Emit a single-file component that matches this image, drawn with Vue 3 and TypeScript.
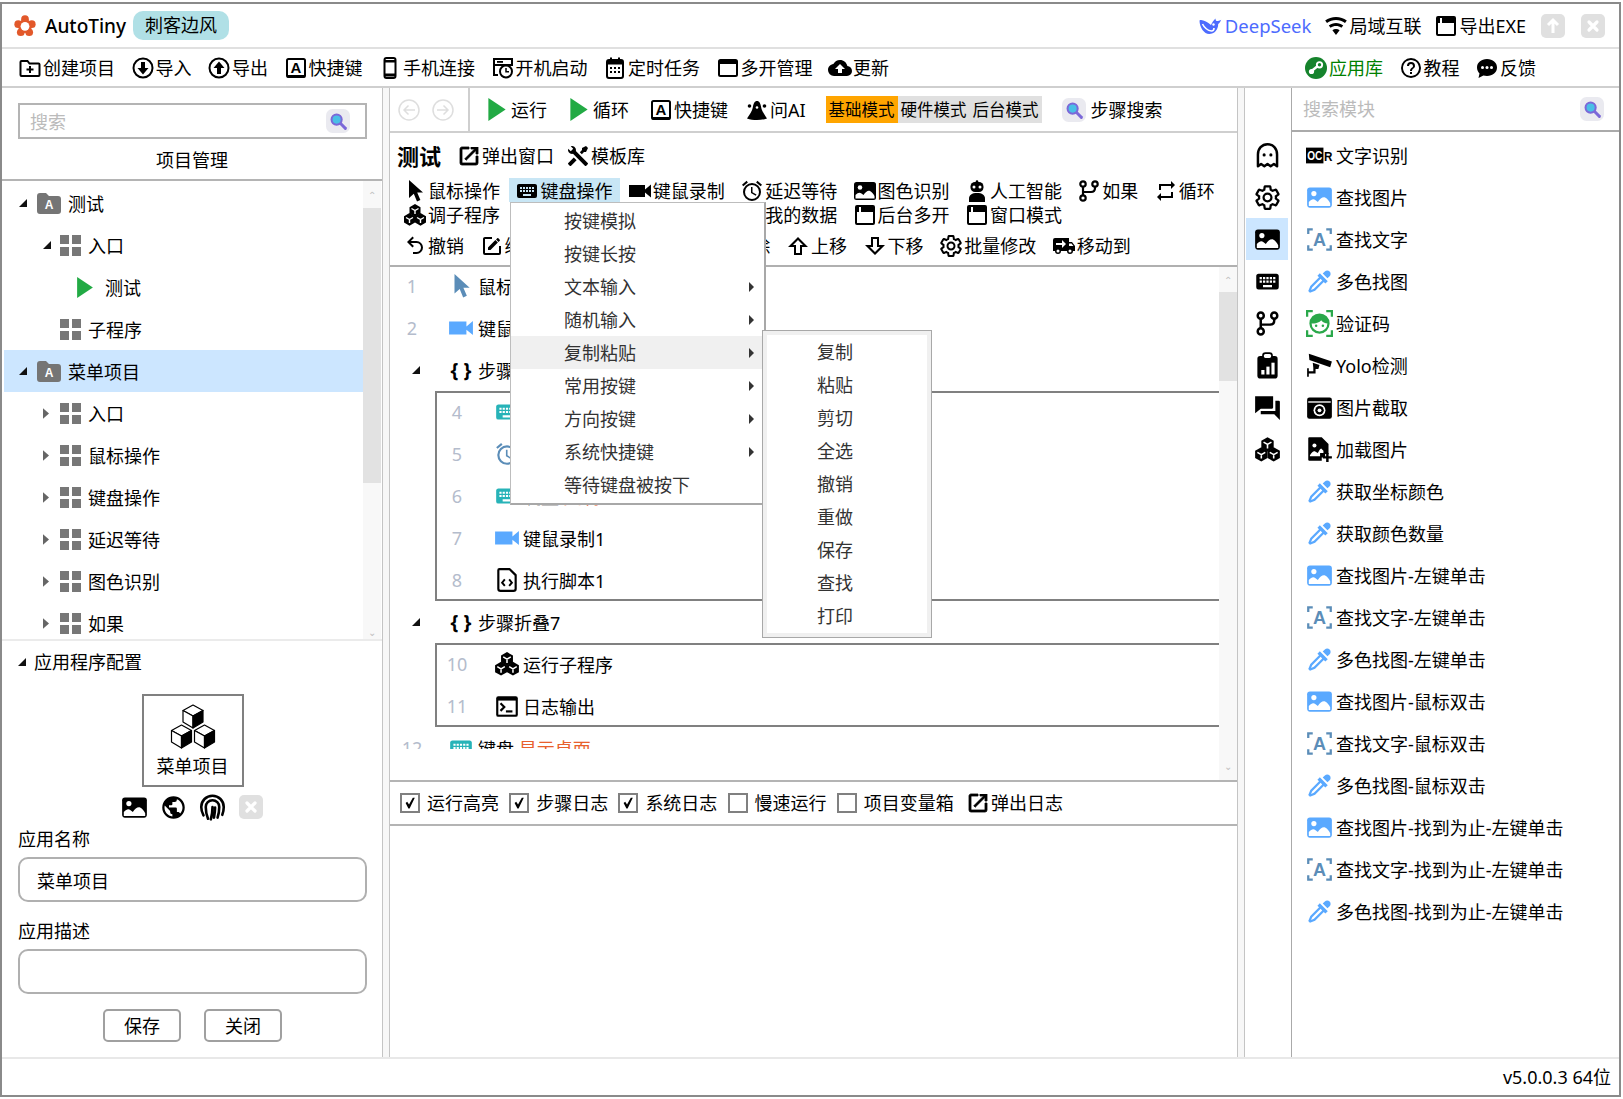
<script setup lang="ts">
interface Tool { icon: string; text: string; color?: string; active?: boolean }
interface TreeRow { level: number; fold: '' | 'open' | 'closed'; kind: string; text: string; selected?: boolean }
interface Step { n: number; icon?: string; color?: string; text: string; hot?: string; brace?: boolean }

const menuItems: Tool[] = [
  { icon: 'i-folder-add', text: '创建项目' },
  { icon: 'i-down-circle', text: '导入' },
  { icon: 'i-up-circle', text: '导出' },
  { icon: 'i-key-a', text: '快捷键' },
  { icon: 'i-phone', text: '手机连接' },
  { icon: 'i-boot', text: '开机启动' },
  { icon: 'i-calendar', text: '定时任务' },
  { icon: 'i-window-plain', text: '多开管理' },
  { icon: 'i-cloud', text: '更新' }
]
const menuRight: Tool[] = [
  { icon: 'i-steam', text: '应用库', color: 'c-green' },
  { icon: 'i-help', text: '教程' },
  { icon: 'i-chat', text: '反馈' }
]
const tree: TreeRow[] = [
  { level: 0, fold: 'open', kind: 'folder', text: '测试' },
  { level: 1, fold: 'open', kind: 'grid', text: '入口' },
  { level: 2, fold: '', kind: 'play', text: '测试' },
  { level: 1, fold: '', kind: 'grid', text: '子程序' },
  { level: 0, fold: 'open', kind: 'folder', text: '菜单项目', selected: true },
  { level: 1, fold: 'closed', kind: 'grid', text: '入口' },
  { level: 1, fold: 'closed', kind: 'grid', text: '鼠标操作' },
  { level: 1, fold: 'closed', kind: 'grid', text: '键盘操作' },
  { level: 1, fold: 'closed', kind: 'grid', text: '延迟等待' },
  { level: 1, fold: 'closed', kind: 'grid', text: '图色识别' },
  { level: 1, fold: 'closed', kind: 'grid', text: '如果' }
]
const modules1: Tool[] = [
  { icon: 'i-cursor', text: '鼠标操作' },
  { icon: 'i-keyboard', text: '键盘操作', active: true },
  { icon: 'i-video', text: '键鼠录制' },
  { icon: 'i-alarm', text: '延迟等待' },
  { icon: 'i-image', text: '图色识别' },
  { icon: 'i-robot', text: '人工智能' },
  { icon: 'i-branch', text: '如果' },
  { icon: 'i-repeat', text: '循环' },
  { icon: 'i-cubes-b', text: '调子程序' },
  { icon: 'i-script', text: '执行脚本' },
  { icon: 'i-console', text: '日志输出' },
  { icon: 'i-image', text: '我的数据' },
  { icon: 'i-win', text: '后台多开' },
  { icon: 'i-win', text: '窗口模式' }
]
const editTools: Tool[] = [
  { icon: 'i-undo', text: '撤销' },
  { icon: 'i-edit', text: '编辑' },
  { icon: 'i-edit', text: '复制' },
  { icon: 'i-edit', text: '粘贴' },
  { icon: 'i-edit', text: '删除' },
  { icon: 'i-up-bold', text: '上移' },
  { icon: 'i-down-bold', text: '下移' },
  { icon: 'i-gear', text: '批量修改' },
  { icon: 'i-truck', text: '移动到' }
]
const keyMenu = ['按键模拟', '按键长按', '文本输入', '随机输入', '复制粘贴', '常用按键', '方向按键', '系统快捷键', '等待键盘被按下']
const keyMenuArrow = ['文本输入', '随机输入', '复制粘贴', '常用按键', '方向按键', '系统快捷键']
const subMenu = ['复制', '粘贴', '剪切', '全选', '撤销', '重做', '保存', '查找', '打印']

const topSteps: Step[] = [
  { n: 1, icon: 'i-cursor', color: 'c-steel', text: '鼠标点击' },
  { n: 2, icon: 'i-video', color: 'c-blue', text: '键鼠录制2' }
]
const group1: Step[] = [
  { n: 4, icon: 'i-keyboard', color: 'c-teal', text: '键盘 ', hot: '粘贴' },
  { n: 5, icon: 'i-alarm', color: 'c-steel', text: '延迟等待' },
  { n: 6, icon: 'i-keyboard', color: 'c-teal', text: '键盘 ', hot: '复制' },
  { n: 7, icon: 'i-video', color: 'c-blue', text: '键鼠录制1' },
  { n: 8, icon: 'i-script', text: '执行脚本1' }
]
const group2: Step[] = [
  { n: 10, icon: 'i-cubes-b', text: '运行子程序' },
  { n: 11, icon: 'i-console', text: '日志输出' }
]
const logChecks = [
  { text: '运行高亮', on: true },
  { text: '步骤日志', on: true },
  { text: '系统日志', on: true },
  { text: '慢速运行', on: false },
  { text: '项目变量箱', on: false }
]
const sideIcons = ['i-ghost', 'i-gear', 'i-image', 'i-keyboard', 'i-branch', 'i-clipboard', 'i-forum', 'i-cubes-b']
const modules: Tool[] = [
  { icon: 'i-ocr', text: '文字识别' },
  { icon: 'i-image', text: '查找图片', color: 'c-blue' },
  { icon: 'i-findtext', text: '查找文字', color: 'c-steel' },
  { icon: 'i-dropper', text: '多色找图', color: 'c-blue' },
  { icon: 'i-captcha', text: '验证码', color: 'c-leaf' },
  { icon: 'i-cctv', text: 'Yolo检测' },
  { icon: 'i-camera', text: '图片截取' },
  { icon: 'i-loadimg', text: '加载图片' },
  { icon: 'i-dropper', text: '获取坐标颜色', color: 'c-blue' },
  { icon: 'i-dropper', text: '获取颜色数量', color: 'c-blue' },
  { icon: 'i-image', text: '查找图片-左键单击', color: 'c-blue' },
  { icon: 'i-findtext', text: '查找文字-左键单击', color: 'c-steel' },
  { icon: 'i-dropper', text: '多色找图-左键单击', color: 'c-blue' },
  { icon: 'i-image', text: '查找图片-鼠标双击', color: 'c-blue' },
  { icon: 'i-findtext', text: '查找文字-鼠标双击', color: 'c-steel' },
  { icon: 'i-dropper', text: '多色找图-鼠标双击', color: 'c-blue' },
  { icon: 'i-image', text: '查找图片-找到为止-左键单击', color: 'c-blue' },
  { icon: 'i-findtext', text: '查找文字-找到为止-左键单击', color: 'c-steel' },
  { icon: 'i-dropper', text: '多色找图-找到为止-左键单击', color: 'c-blue' }
]
</script>

<template>
  <svg class="defs" aria-hidden="true">
    <symbol id="i-logo" viewBox="0 0 24 24">
      <g fill="#e2582a"><circle cx="12" cy="4.6" r="4.2"/><circle cx="19.4" cy="10" r="4.2"/><circle cx="16.6" cy="18.8" r="4.2"/><circle cx="7.4" cy="18.8" r="4.2"/><circle cx="4.6" cy="10" r="4.2"/><circle cx="12" cy="12" r="7.5"/></g>
      <circle cx="12" cy="12.4" r="4.8" fill="#fff"/>
    </symbol>
    <symbol id="i-whale" viewBox="0 0 24 24">
      <path fill="#4d6bfe" d="M1.500 6.500C4 5 9 8 13 11c1-2.500 2.500-4.500 4.500-6.500 0 2 .8 2.800 2.500 2.500 1.200 0 2.200-.6 3.200-1.200-.7 2-1.700 3.200-3 4.200 0 6-4 10-9 10S1.500 13.500 1.500 6.500z"/>
      <path fill="none" stroke="#fff" stroke-width="1.600" d="M4.500 10c2 4 5 6.500 9 7 1.500 0 2.500-1 2.500-3"/>
      <circle cx="15.500" cy="10.500" r="1.200" fill="#fff"/>
    </symbol>
    <symbol id="i-wifi" viewBox="0 0 24 24"><path fill="currentColor" d="M12,21L15.6,16.2C14.6,15.45 13.35,15 12,15C10.65,15 9.4,15.45 8.4,16.2L12,21M12,3C7.95,3 4.21,4.34 1.2,6.6L3,9C5.5,7.12 8.62,6 12,6C15.38,6 18.5,7.12 21,9L22.8,6.6C19.79,4.34 16.05,3 12,3M12,9C9.3,9 6.81,9.89 4.8,11.4L6.6,13.8C8.1,12.67 9.97,12 12,12C14.03,12 15.9,12.67 17.4,13.8L19.2,11.4C17.19,9.89 14.7,9 12,9Z"/></symbol>
    <symbol id="i-win" viewBox="0 0 24 24">
      <rect x="3" y="3" width="18" height="18" rx="1" fill="#fff" stroke="#000" stroke-width="2"/>
      <rect x="3" y="3" width="18" height="6" fill="#000"/><rect x="6" y="4" width="2" height="5" fill="#fff"/>
    </symbol>
    <symbol id="i-window-plain" viewBox="0 0 24 24">
      <rect x="3" y="4" width="18" height="16" rx="1.500" fill="none" stroke="#000" stroke-width="2"/><rect x="3" y="4" width="18" height="4" fill="#000"/>
    </symbol>
    <symbol id="i-folder-add" viewBox="0 0 24 24">
      <path fill="none" stroke="#000" stroke-width="2" d="M2.500 6a1 1 0 0 1 1-1h6l2 2.500h9a1 1 0 0 1 1 1V19a1 1 0 0 1-1 1h-17a1 1 0 0 1-1-1z"/>
      <path fill="#000" d="M11 10h2v2.500h2.500v2H13V17h-2v-2.500H8.500v-2H11z"/>
    </symbol>
    <symbol id="i-down-circle" viewBox="0 0 24 24">
      <circle cx="12" cy="12" r="9.500" fill="none" stroke="#000" stroke-width="2"/><path fill="#000" d="M10 6h4v6h3.500L12 18.500 6.500 12H10z"/>
    </symbol>
    <symbol id="i-up-circle" viewBox="0 0 24 24">
      <circle cx="12" cy="12" r="9.500" fill="none" stroke="#000" stroke-width="2"/><path fill="#000" d="M10 18h4v-6h3.500L12 5.500 6.500 12H10z"/>
    </symbol>
    <symbol id="i-key-a" viewBox="0 0 24 24">
      <rect x="3" y="3" width="18" height="18" rx="1.500" fill="none" stroke="#000" stroke-width="2"/><rect x="3" y="19" width="18" height="2.500" fill="#000"/>
    </symbol>
    <symbol id="i-phone" viewBox="0 0 24 24">
      <rect x="6.500" y="2" width="11" height="20" rx="2" fill="none" stroke="#000" stroke-width="2"/><rect x="6.500" y="4" width="11" height="2.500" fill="#000"/><rect x="6.500" y="17.500" width="11" height="3" fill="#000"/>
    </symbol>
    <symbol id="i-boot" viewBox="0 0 24 24">
      <path fill="none" stroke="#000" stroke-width="2" d="M3 3h18v6H3zM3 9v10h4"/>
      <rect x="6" y="5" width="6" height="1.800" fill="#000"/>
      <circle cx="15" cy="15.500" r="6" fill="#fff" stroke="#000" stroke-width="2"/>
      <path fill="none" stroke="#000" stroke-width="1.500" d="M15 12v3.800h3"/>
    </symbol>
    <symbol id="i-calendar" viewBox="0 0 24 24">
      <rect x="4" y="4" width="16" height="18" rx="2" fill="none" stroke="#000" stroke-width="2"/><rect x="4" y="4" width="16" height="4.500" fill="#000"/><rect x="7" y="1.500" width="2" height="4" fill="#000"/><rect x="15" y="1.500" width="2" height="4" fill="#000"/>
      <g fill="#000"><rect x="7" y="11" width="2" height="2"/><rect x="11" y="11" width="2" height="2"/><rect x="15" y="11" width="2" height="2"/><rect x="7" y="15" width="2" height="2"/><rect x="11" y="15" width="2" height="2"/><rect x="15" y="15" width="2" height="2"/></g>
    </symbol>
    <symbol id="i-cloud" viewBox="0 0 24 24"><path fill="currentColor" d="M14,13V17H10V13H7L12,8L17,13M19.35,10.03C18.67,6.59 15.64,4 12,4C9.11,4 6.6,5.64 5.35,8.03C2.34,8.36 0,10.9 0,14A6,6 0 0,0 6,20H19A5,5 0 0,0 24,15C24,12.36 21.95,10.22 19.35,10.03Z"/></symbol>
    <symbol id="i-steam" viewBox="0 0 24 24">
      <circle cx="12" cy="12" r="11" fill="#15832c"/>
      <path stroke="#fff" stroke-width="2.400" d="M15 9 7 15.500"/>
      <circle cx="15.500" cy="8.800" r="3.600" fill="#fff"/><circle cx="15.500" cy="8.800" r="1.700" fill="#15832c"/>
      <circle cx="7.500" cy="15.500" r="2.600" fill="#fff"/>
    </symbol>
    <symbol id="i-help" viewBox="0 0 24 24"><path fill="currentColor" d="M11,18H13V16H11V18M12,2A10,10 0 0,0 2,12A10,10 0 0,0 12,22A10,10 0 0,0 22,12A10,10 0 0,0 12,2M12,20C7.59,20 4,16.41 4,12C4,7.59 7.59,4 12,4C16.41,4 20,7.59 20,12C20,16.41 16.41,20 12,20M12,6A4,4 0 0,0 8,10H10A2,2 0 0,1 12,8A2,2 0 0,1 14,10C14,12 11,11.75 11,15H13C13,12.75 16,12.500 16,10A4,4 0 0,0 12,6Z"/></symbol>
    <symbol id="i-chat" viewBox="0 0 24 24">
      <path fill="#000" d="M12 3c5.800 0 10 3.600 10 8.500S17.800 20 12 20c-1.300 0-2.500-.2-3.600-.5L3.500 22l1-4.400C3 16 2 13.900 2 11.500 2 6.600 6.200 3 12 3z"/>
      <g fill="#fff"><circle cx="7.500" cy="11.500" r="1.500"/><circle cx="12" cy="11.500" r="1.500"/><circle cx="16.500" cy="11.500" r="1.500"/></g>
    </symbol>
    <symbol id="i-search" viewBox="0 0 26 26">
      <rect width="26" height="26" rx="7" fill="#eaeaf0"/>
      <path stroke="#7b68d8" stroke-width="3.200" stroke-linecap="round" d="M15.500 15.500 21 21"/>
      <circle cx="11.500" cy="11.500" r="5.500" fill="#49bfe6" stroke="#7b68d8" stroke-width="2.200"/>
    </symbol>
    <symbol id="i-play" viewBox="0 0 18 24"><polygon points="0,0 18,12 0,24" fill="#22aa44"/></symbol>
    <symbol id="i-bell" viewBox="0 0 24 24">
      <path fill="#000" d="M12 3c2.500 0 3.500 2.500 4.200 6.500 .5 3 3 7 5.800 11 -6 2-14 2-20 0 2.800-4 5.300-8 5.800-11C8.500 5.500 9.500 3 12 3z"/>
      <circle cx="4.500" cy="8" r="1.800" fill="#000"/><circle cx="19.500" cy="8" r="1.800" fill="#000"/>
      <circle cx="12" cy="9.500" r="1.300" fill="#fff"/>
    </symbol>
    <symbol id="i-open" viewBox="0 0 24 24"><path fill="currentColor" stroke="currentColor" stroke-width=".8" d="M14,3V5H17.59L7.76,14.83L9.17,16.24L19,6.41V10H21V3M19,19H5V5H12V3H5C3.89,3 3,3.9 3,5V19A2,2 0 0,0 5,21H19A2,2 0 0,0 21,19V12H19V19Z"/></symbol>
    <symbol id="i-tools" viewBox="0 0 24 24"><path fill="currentColor" d="M21.71 20.29L20.29 21.71A1 1 0 0 1 18.88 21.71L7 9.85A3.81 3.81 0 0 1 6 10A4 4 0 0 1 2.22 4.7L4.76 7.24L5.29 6.71L6.71 5.29L7.24 4.76L4.7 2.22A4 4 0 0 1 10 6A3.81 3.81 0 0 1 9.85 7L21.71 18.88A1 1 0 0 1 21.71 20.29M2.29 18.88A1 1 0 0 0 2.29 20.29L3.71 21.71A1 1 0 0 0 5.12 21.71L10.59 16.25L7.76 13.42M20 2L16 4V6L13.83 8.17L15.83 10.17L18 8H20L22 4Z"/></symbol>
    <symbol id="i-cursor" viewBox="0 0 24 24"><path fill="currentColor" d="M6 1v18l4.800-4.200L14 22.500l3.400-1.500-3.200-7.500H20z"/></symbol>
    <symbol id="i-keyboard" viewBox="0 0 24 24"><path fill="currentColor" d="M19,10H17V8H19M19,13H17V11H19M16,10H14V8H16M16,13H14V11H16M16,17H8V15H16M7,10H5V8H7M7,13H5V11H7M8,11H10V13H8M8,8H10V10H8M11,11H13V13H11M11,8H13V10H11M20,5H4C2.89,5 2,5.890 2,7V17A2,2 0 0,0 4,19H20A2,2 0 0,0 22,17V7C22,5.890 21.1,5 20,5Z"/></symbol>
    <symbol id="i-video" viewBox="0 0 24 24"><path fill="currentColor" d="M17,10.500V6H1V18H17V13.500L23,18.500V5.500L17,10.500Z"/></symbol>
    <symbol id="i-alarm" viewBox="0 0 24 24"><path fill="currentColor" d="M12,20A7,7 0 0,1 5,13A7,7 0 0,1 12,6A7,7 0 0,1 19,13A7,7 0 0,1 12,20M12,4A9,9 0 0,0 3,13A9,9 0 0,0 12,22A9,9 0 0,0 21,13A9,9 0 0,0 12,4M12.500,8H11V14L15.750,16.850L16.500,15.620L12.500,13.250V8M7.880,3.390L6.600,1.860L2,5.710L3.290,7.240L7.880,3.390M22,5.720L17.400,1.860L16.110,3.390L20.710,7.250L22,5.720Z"/></symbol>
    <symbol id="i-image" viewBox="0 0 24 24">
      <rect x="1" y="3" width="22" height="18" rx="2.500" fill="currentColor"/>
      <circle cx="7" cy="8.500" r="2.300" fill="#fff"/>
      <path fill="#fff" d="M2.500 19.500v-3.500c2.500-2.500 4-3 6-1.500l2 1.500c2-3 4.500-5 6.500-4 2 1 3.500 3 4.500 5v2.500z"/>
    </symbol>
    <symbol id="i-robot" viewBox="0 0 24 24">
      <circle cx="12" cy="2.500" r="1.300" fill="#000"/><rect x="5.500" y="3" width="13" height="10" rx="4.500" fill="#000"/>
      <circle cx="9" cy="8" r="1.500" fill="#fff"/><circle cx="15" cy="8" r="1.500" fill="#fff"/>
      <path fill="#000" d="M4 23v-3.500C4 16 7 14 12 14s8 2 8 5.500V23z"/>
    </symbol>
    <symbol id="i-branch" viewBox="0 0 24 24">
      <g fill="none" stroke="currentColor" stroke-width="2.200"><circle cx="6" cy="5" r="2.700"/><circle cx="6" cy="19" r="2.700"/><circle cx="18" cy="5" r="2.700"/><path d="M6 7.700v8.600M18 7.700V9c0 2.500-1.500 4-4 4H6"/></g>
    </symbol>
    <symbol id="i-repeat" viewBox="0 0 24 24"><path fill="currentColor" d="M17,17H7V14L3,18L7,22V19H19V13H17M7,7H17V10L21,6L17,2V5H5V11H7V7Z"/></symbol>
    <symbol id="i-cubes-b" viewBox="0 0 24 24">
      <g fill="#000"><polygon points="12,1 17.500,4.200 17.500,10.500 12,13.700 6.500,10.500 6.500,4.200"/><polygon points="6.500,10 12,13.200 12,19.500 6.500,22.700 1,19.500 1,13.200"/><polygon points="17.500,10 23,13.200 23,19.500 17.500,22.700 12,19.500 12,13.200"/></g>
      <g fill="none" stroke="#fff" stroke-width="1.400"><path d="M8.500 5.500 12 7.500 15.500 5.500M12 7.500v3.500M3 14.500 6.500 16.500 10 14.500M6.500 16.500v3.500M14 14.500 17.500 16.500 21 14.500M17.500 16.500v3.500"/></g>
    </symbol>
    <symbol id="i-script" viewBox="0 0 24 24">
      <path fill="#fff" stroke="#000" stroke-width="2" stroke-linejoin="round" d="M5 2h9.500L20 7.500V20a2 2 0 0 1-2 2H6a2 2 0 0 1-2-2V3a1 1 0 0 1 1-1z"/>
      <path fill="none" stroke="#000" stroke-width="1.800" d="M10 11.500 7.500 14.500 10 17.500M14 11.500l2.500 3-2.500 3"/>
    </symbol>
    <symbol id="i-console" viewBox="0 0 24 24">
      <rect x="2" y="3" width="20" height="19" rx="2" fill="#000"/><rect x="4" y="7" width="16" height="13" fill="#fff"/>
      <path fill="none" stroke="#000" stroke-width="2" d="M6 9.500l3.500 3.500L6 16.500"/><rect x="11" y="16" width="6" height="2" fill="#000"/>
    </symbol>
    <symbol id="i-undo" viewBox="0 0 24 24"><path fill="currentColor" d="M13.500,7A6.500,6.500 0 0,1 20,13.500A6.500,6.500 0 0,1 13.500,20H10V18H13.500C16,18 18,16 18,13.500C18,11 16,9 13.500,9H7.830L10.910,12.090L9.500,13.500L4,8L9.500,2.500L10.920,3.910L7.830,7H13.500Z"/></symbol>
    <symbol id="i-edit" viewBox="0 0 24 24"><path fill="currentColor" d="M5,3C3.890,3 3,3.890 3,5V19A2,2 0 0,0 5,21H19A2,2 0 0,0 21,19V12H19V19H5V5H12V3H5M17.780,4C17.590,4 17.400,4.070 17.250,4.220L16.030,5.430L18.530,7.930L19.750,6.720C20.040,6.430 20.040,5.950 19.750,5.660L18.330,4.220C18.180,4.070 18,4 17.780,4M15.370,6.120L8,13.500V16H10.500L17.870,8.620L15.370,6.120Z"/></symbol>
    <symbol id="i-up-bold" viewBox="0 0 24 24"><path fill="currentColor" d="M16,13V21H8V13H2L12,3L22,13H16M7,11H10V19H14V11H17L12,6L7,11Z"/></symbol>
    <symbol id="i-down-bold" viewBox="0 0 24 24"><path fill="currentColor" d="M22,11L12,21L2,11H8V3H16V11H22M12,18L17,13H14V5H10V13H7L12,18Z"/></symbol>
    <symbol id="i-gear" viewBox="0 0 24 24"><path fill="none" stroke="currentColor" stroke-width="2" d="M12,15.500A3.500,3.500 0 0,1 8.500,12A3.500,3.500 0 0,1 12,8.500A3.500,3.500 0 0,1 15.500,12A3.500,3.500 0 0,1 12,15.500M19.430,12.970C19.470,12.650 19.500,12.330 19.500,12C19.500,11.670 19.470,11.340 19.430,11L21.540,9.370C21.730,9.220 21.780,8.950 21.660,8.730L19.660,5.270C19.540,5.050 19.270,4.960 19.050,5.050L16.560,6.050C16.040,5.660 15.500,5.320 14.870,5.070L14.500,2.420C14.460,2.180 14.250,2 14,2H10C9.750,2 9.540,2.180 9.500,2.420L9.130,5.070C8.500,5.320 7.960,5.660 7.440,6.050L4.950,5.050C4.730,4.960 4.460,5.050 4.340,5.270L2.340,8.730C2.210,8.950 2.270,9.220 2.460,9.370L4.570,11C4.530,11.340 4.500,11.670 4.500,12C4.500,12.330 4.530,12.650 4.570,12.970L2.460,14.630C2.270,14.780 2.210,15.050 2.340,15.270L4.340,18.730C4.460,18.950 4.730,19.030 4.950,18.950L7.440,17.940C7.960,18.340 8.500,18.680 9.130,18.930L9.500,21.580C9.540,21.820 9.750,22 10,22H14C14.250,22 14.460,21.820 14.500,21.580L14.870,18.930C15.500,18.670 16.040,18.340 16.560,17.940L19.050,18.950C19.270,19.030 19.540,18.950 19.660,18.730L21.660,15.270C21.780,15.050 21.730,14.780 21.540,14.630L19.430,12.970Z"/></symbol>
    <symbol id="i-truck" viewBox="0 0 24 24"><path fill="currentColor" d="M3,4A2,2 0 0,0 1,6V17H3A3,3 0 0,0 6,20A3,3 0 0,0 9,17H15A3,3 0 0,0 18,20A3,3 0 0,0 21,17H23V12L20,8H17V4M10,6L14,10L10,14V11H4V9H10M17,9.500H19.500L21.470,12H17M6,15.500A1.500,1.500 0 0,1 7.500,17A1.500,1.500 0 0,1 6,18.500A1.500,1.500 0 0,1 4.500,17A1.500,1.500 0 0,1 6,15.500M18,15.500A1.500,1.500 0 0,1 19.500,17A1.500,1.500 0 0,1 18,18.500A1.500,1.500 0 0,1 16.500,17A1.500,1.500 0 0,1 18,15.500Z"/></symbol>
    <symbol id="i-ghost" viewBox="0 0 24 24">
      <path fill="none" stroke="#000" stroke-width="2.200" stroke-linejoin="round" d="M12 2C7 2 3.500 6 3.500 11v10.500l2.800-2 2.900 2 2.800-2 2.800 2 2.900-2 2.800 2V11C20.500 6 17 2 12 2z"/>
      <circle cx="9" cy="11.500" r="1.400" fill="#000"/><circle cx="15" cy="11.500" r="1.400" fill="#000"/>
    </symbol>
    <symbol id="i-clipboard" viewBox="0 0 24 24">
      <rect x="3" y="3.500" width="18" height="20" rx="2.500" fill="#000"/>
      <rect x="8" y="1" width="8" height="5" rx="2.200" fill="#fff" stroke="#000" stroke-width="1.500"/>
      <g fill="#fff"><rect x="6.500" y="16" width="2.800" height="4"/><rect x="11" y="13" width="2.800" height="7"/><rect x="15.500" y="9.500" width="2.800" height="10.500"/></g>
    </symbol>
    <symbol id="i-forum" viewBox="0 0 24 24"><path fill="currentColor" d="M22,6H19V15H6V18H18L23,23V7A1,1 0 0,0 22,6M17,12V2H1V17L6,13H16A1,1 0 0,0 17,12Z"/></symbol>
    <symbol id="i-ocr" viewBox="0 0 24 24">
      <rect x="0" y="5" width="15.500" height="14" fill="#000"/>
    </symbol>
    <symbol id="i-findtext" viewBox="0 0 24 24">
      <path fill="none" stroke="currentColor" stroke-width="2" d="M2 7V3h4M18 3h4v4M2 17v4h4M18 21h4v-4"/>
    </symbol>
    <symbol id="i-dropper" viewBox="0 0 24 24"><path fill="currentColor" d="M19.350,11.720L17.220,13.850L15.810,12.430L8.100,20.140L3.500,22L2,20.500L3.860,15.900L11.570,8.190L10.150,6.780L12.280,4.650L19.350,11.720M16.760,3C17.930,1.830 19.830,1.830 21,3C22.170,4.170 22.170,6.070 21,7.240L19.080,9.160L14.840,4.920L16.760,3M5.560,17.030L4.500,19.500L6.970,18.440L14.400,11L13,9.600L5.560,17.030Z"/></symbol>
    <symbol id="i-captcha" viewBox="0 0 24 24">
      <path fill="none" stroke="currentColor" stroke-width="2" d="M1 6V1h5M18 1h5v5M1 18v5h5M18 23h5v-5"/>
      <circle cx="12" cy="12" r="8" fill="#fff" stroke="currentColor" stroke-width="2"/>
      <path fill="currentColor" d="M4 12a8 8 0 0 1 16 0c-3.500-.2-5.500-1.200-6.500-3-1.200 2-5 3-9.500 3z"/>
      <circle cx="9" cy="14" r="1.100" fill="currentColor"/><circle cx="15" cy="14" r="1.100" fill="currentColor"/>
    </symbol>
    <symbol id="i-cctv" viewBox="0 0 24 24">
      <path fill="#000" d="M2.500 1.500 23 8.500l-1.500 5L3 7z"/>
      <path fill="#000" d="M6 9.500 12 11.500 11 15 8.500 15v4H2.500v3H1v-7.500h1.500V17H6.500V14z"/>
    </symbol>
    <symbol id="i-camera" viewBox="0 0 24 24">
      <rect x="1" y="3" width="22" height="19" rx="2" fill="#000"/><rect x="2" y="6.500" width="20" height="1.200" fill="#fff"/>
      <circle cx="12" cy="14.500" r="5.300" fill="#fff"/><circle cx="12" cy="14.500" r="3.800" fill="#000"/><circle cx="12" cy="14.500" r="1.700" fill="#fff"/>
    </symbol>
    <symbol id="i-loadimg" viewBox="0 0 24 24">
      <path fill="#000" d="M3 1h11l6 6v9h-3v3h-3v3H3a1 1 0 0 1-1-1V2a1 1 0 0 1 1-1z"/>
      <circle cx="7.500" cy="8.500" r="1.800" fill="#fff"/><path fill="#fff" d="M3.500 17c2-3 3.500-4 5-3l2 1c1-2 2-3.500 3-4l2 2v2h-3v3H3.500z"/>
      <path stroke="#000" stroke-width="2.200" d="M19 15v8M15 19h8"/>
    </symbol>
    <symbol id="i-earth" viewBox="0 0 24 24"><path fill="currentColor" d="M17.900,17.390C17.640,16.590 16.890,16 16,16H15V13A1,1 0 0,0 14,12H8V10H10A1,1 0 0,0 11,9V7H13A2,2 0 0,0 15,5V4.590C17.930,5.770 20,8.640 20,12C20,14.080 19.200,15.970 17.900,17.390M11,19.930C7.050,19.440 4,16.080 4,12C4,11.380 4.080,10.780 4.210,10.210L9,15V16A2,2 0 0,0 11,18M12,2A10,10 0 0,0 2,12A10,10 0 0,0 12,22A10,10 0 0,0 22,12A10,10 0 0,0 12,2Z"/></symbol>
    <symbol id="i-finger" viewBox="0 0 24 24">
      <g fill="none" stroke="#000" stroke-width="2.300" stroke-linecap="round"><path d="M4 19c-1.300-2.500-2-4.700-2-7.500a10 10 0 0 1 20 0c0 2.500-.5 4.800-1.300 7"/><path d="M8 22c-1.200-3-2-6-2-10.500a6 6 0 0 1 12 0c0 3.500-.5 6.500-1.500 9.500"/><path d="M12 11.500c0 4-.5 7.500-1.500 11M14.300 12c0 3.500-.5 6-1 9"/></g>
    </symbol>
    <symbol id="i-cubes" viewBox="0 0 46 46">
      <g stroke="#000" stroke-width="1.200" stroke-linejoin="round">
        <g v-for="c in ['translate(23 12)', 'translate(11.500 32)', 'translate(34.500 32)']" :key="c" :transform="c">
          <polygon points="0,-11 10,-5.500 0,0 -10,-5.500" fill="#fff"/>
          <polygon points="-10,-5.500 0,0 0,12 -10,6" fill="#fff"/>
          <polygon points="0,0 10,-5.500 10,6 0,12" fill="#000"/>
        </g>
      </g>
    </symbol>
    <symbol id="i-closebtn" viewBox="0 0 24 24">
      <rect width="24" height="24" rx="5" fill="#e0e0e0"/>
      <path stroke="#fff" stroke-width="3.200" stroke-linecap="round" d="M8 8l8 8M16 8l-8 8"/>
    </symbol>
    <symbol id="i-upbtn" viewBox="0 0 24 24">
      <rect width="24" height="24" rx="5" fill="#e0e0e0"/>
      <path stroke="#fff" stroke-width="3" fill="none" d="M12 19V6M7 11l5-5 5 5"/>
    </symbol>
    <symbol id="i-navl" viewBox="0 0 22 22">
      <circle cx="11" cy="11" r="10" fill="none" stroke="#dedede" stroke-width="1.500"/>
      <path stroke="#dedede" stroke-width="1.500" fill="none" d="M17 11H6M10.500 6.500 6 11l4.500 4.500"/>
    </symbol>
    <symbol id="i-navr" viewBox="0 0 22 22">
      <circle cx="11" cy="11" r="10" fill="none" stroke="#dedede" stroke-width="1.500"/>
      <path stroke="#dedede" stroke-width="1.500" fill="none" d="M5 11h11M11.500 6.500 16 11l-4.500 4.500"/>
    </symbol>
    <symbol id="i-folder-a" viewBox="0 0 24 21">
      <path fill="#757575" d="M0 3a3 3 0 0 1 3-3h6l3 3h9a3 3 0 0 1 3 3v12a3 3 0 0 1-3 3H3a3 3 0 0 1-3-3z"/>
    </symbol>
    <symbol id="i-grid" viewBox="0 0 21 21">
      <g fill="#777"><rect width="9" height="9"/><rect x="12" width="9" height="9"/><rect y="12" width="9" height="9"/><rect x="12" y="12" width="9" height="9"/></g>
    </symbol>
    <symbol id="i-tri-open" viewBox="0 0 8 8"><polygon points="8,0 8,8 0,8" fill="#111"/></symbol>
    <symbol id="i-tri-closed" viewBox="0 0 7 12"><polygon points="0,0 7,6 0,12" fill="#666"/></symbol>
    <symbol id="i-check" viewBox="0 0 20 20"><path fill="#000" d="M4.500 10l2-1.500 2.300 3.500L13.500 3.500h2.500L9.500 17h-1.500z"/></symbol>
  </svg>

  <div class="app">
    <header class="titlebar">
      <svg class="logo"><use href="#i-logo"/></svg>
      <span class="brand">AutoTiny</span>
      <span class="badge">刺客边风</span>
      <div class="spacer"></div>
      <span class="tool deepseek"><svg class="ic-w"><use href="#i-whale"/></svg>DeepSeek</span>
      <span class="tool"><svg class="ic"><use href="#i-wifi"/></svg>局域互联</span>
      <span class="tool"><svg class="ic"><use href="#i-win"/></svg>导出EXE</span>
      <svg class="winbtn"><use href="#i-upbtn"/></svg>
      <svg class="winbtn"><use href="#i-closebtn"/></svg>
    </header>

    <nav class="menubar">
      <span v-for="m in menuItems" :key="m.text" class="tool">
        <svg class="ic" viewBox="0 0 24 24"><use :href="'#' + m.icon" width="24" height="24"/><text v-if="m.icon === 'i-key-a'" class="glyph-a" x="12" y="17" text-anchor="middle">A</text></svg>{{ m.text }}
      </span>
      <div class="spacer"></div>
      <span v-for="m in menuRight" :key="m.text" class="tool" :class="m.color"><svg class="ic"><use :href="'#' + m.icon"/></svg>{{ m.text }}</span>
    </nav>

    <main class="main">
      <aside class="left">
        <div class="left-head">
          <label class="search-box">
            <input class="search-input" placeholder="搜索" />
            <svg class="search-btn"><use href="#i-search"/></svg>
          </label>
          <div class="left-title">项目管理</div>
        </div>
        <div class="tree-wrap">
          <div class="tree">
            <div v-for="(r, i) in tree" :key="i" class="tree-row" :class="[`lv${r.level}`, { selected: r.selected }]">
              <span class="fold">
                <svg v-if="r.fold === 'open'" class="tri"><use href="#i-tri-open"/></svg>
                <svg v-else-if="r.fold === 'closed'" class="tri-c"><use href="#i-tri-closed"/></svg>
              </span>
              <svg v-if="r.kind === 'folder'" class="t-folder" viewBox="0 0 24 21"><use href="#i-folder-a" width="24" height="21"/><text class="glyph-f" x="12" y="16" text-anchor="middle">A</text></svg>
              <svg v-else-if="r.kind === 'grid'" class="t-grid"><use href="#i-grid"/></svg>
              <svg v-else class="t-play"><use href="#i-play"/></svg>
              <span class="tree-text">{{ r.text }}</span>
            </div>
          </div>
          <div class="scrollbar left-sb">
            <div class="sb-btn">⌃</div>
            <div class="sb-thumb"></div>
            <div class="sb-rest"></div>
            <div class="sb-end">⌄</div>
          </div>
        </div>
        <section class="config">
          <div class="config-head"><svg class="tri"><use href="#i-tri-open"/></svg>应用程序配置</div>
          <div class="card">
            <svg class="card-ic"><use href="#i-cubes"/></svg>
            <span>菜单项目</span>
          </div>
          <div class="card-actions">
            <svg class="ic24"><use href="#i-image"/></svg>
            <svg class="ic24"><use href="#i-earth"/></svg>
            <svg class="ic24"><use href="#i-finger"/></svg>
            <svg class="plain24"><use href="#i-closebtn"/></svg>
          </div>
          <label class="f-label first">应用名称</label>
          <input class="f-input" value="菜单项目" readonly />
          <label class="f-label">应用描述</label>
          <input class="f-input" readonly />
          <div class="f-btns">
            <button class="f-btn">保存</button>
            <button class="f-btn">关闭</button>
          </div>
        </section>
      </aside>

      <div class="splitter"></div>

      <section class="center">
        <div class="run-bar">
          <div class="nav">
            <svg class="nav-ic"><use href="#i-navl"/></svg>
            <svg class="nav-ic"><use href="#i-navr"/></svg>
          </div>
          <div class="run-tools">
            <span class="tool g1"><svg class="run-ic"><use href="#i-play"/></svg>运行</span>
            <span class="tool g2"><svg class="run-ic"><use href="#i-play"/></svg>循环</span>
            <span class="tool g3"><svg class="ic" viewBox="0 0 24 24"><use href="#i-key-a" width="24" height="24"/><text class="glyph-a" x="12" y="17" text-anchor="middle">A</text></svg>快捷键</span>
            <span class="tool g4"><svg class="ic"><use href="#i-bell"/></svg>问AI</span>
            <div class="modes">
              <span class="mode on">基础模式</span><span class="mode">硬件模式</span><span class="mode">后台模式</span>
            </div>
            <span class="tool g5"><svg class="search-btn"><use href="#i-search"/></svg>步骤搜索</span>
          </div>
        </div>

        <div class="head-block">
          <div class="title-row">
            <strong class="title">测试</strong>
            <span class="tool"><svg class="ic"><use href="#i-open"/></svg>弹出窗口</span>
            <span class="tool"><svg class="ic"><use href="#i-tools"/></svg>模板库</span>
          </div>
          <div class="module-rows">
            <span v-for="m in modules1" :key="m.text" class="tool mod" :class="{ active: m.active }"><svg class="ic"><use :href="'#' + m.icon"/></svg>{{ m.text }}</span>
          </div>
          <div class="edit-row">
            <span v-for="m in editTools" :key="m.text" class="tool"><svg class="ic"><use :href="'#' + m.icon"/></svg>{{ m.text }}</span>
          </div>
        </div>

        <div class="steps-wrap">
          <div class="steps">
            <div class="steps-inner">
              <div v-for="s in topSteps" :key="s.n" class="step">
                <span class="num">{{ s.n }}</span>
                <svg class="step-ic" :class="s.color"><use :href="'#' + s.icon"/></svg>
                <span class="step-text">{{ s.text }}</span>
              </div>
              <div class="step">
                <span class="num"><svg class="tri"><use href="#i-tri-open"/></svg></span>
                <span class="brace">{ }</span>
                <span class="step-text">步骤折叠3</span>
              </div>
              <div class="group group-a">
                <div v-for="s in group1" :key="s.n" class="step in-group">
                  <span class="num">{{ s.n }}</span>
                  <svg class="step-ic" :class="s.color"><use :href="'#' + s.icon"/></svg>
                  <span class="step-text">{{ s.text }}<em v-if="s.hot" class="hot">{{ s.hot }}</em></span>
                </div>
              </div>
              <div class="step">
                <span class="num"><svg class="tri"><use href="#i-tri-open"/></svg></span>
                <span class="brace">{ }</span>
                <span class="step-text">步骤折叠7</span>
              </div>
              <div class="group group-b">
                <div v-for="s in group2" :key="s.n" class="step in-group">
                  <span class="num">{{ s.n }}</span>
                  <svg class="step-ic"><use :href="'#' + s.icon"/></svg>
                  <span class="step-text">{{ s.text }}</span>
                </div>
              </div>
              <div class="step">
                <span class="num">12</span>
                <svg class="step-ic c-teal"><use href="#i-keyboard"/></svg>
                <span class="step-text">键盘 <em class="hot">显示桌面</em></span>
              </div>
            </div>
          </div>
          <div class="scrollbar center-sb">
            <div class="sb-btn tall">⌃</div>
            <div class="sb-thumb"></div>
            <div class="sb-rest"></div>
            <div class="sb-end tall">⌄</div>
          </div>
        </div>

        <div class="log-bar">
          <span v-for="c in logChecks" :key="c.text" class="chk">
            <span class="box"><svg v-if="c.on" class="tick"><use href="#i-check"/></svg></span>{{ c.text }}
          </span>
          <span class="tool log-open"><svg class="ic"><use href="#i-open"/></svg>弹出日志</span>
        </div>
        <div class="log-body"></div>

        <div class="key-menu">
          <div v-for="k in keyMenu" :key="k" class="km-item" :class="{ hover: k === '复制粘贴' }">
            {{ k }}<i v-if="keyMenuArrow.includes(k)" class="km-arrow"></i>
          </div>
          <div class="sub-menu">
            <div v-for="s in subMenu" :key="s" class="sm-item">{{ s }}</div>
          </div>
        </div>
      </section>

      <div class="splitter"></div>

      <div class="sidebar">
        <div v-for="(s, i) in sideIcons" :key="i" class="side-item" :class="{ selected: s === 'i-image' }"><svg class="ic24"><use :href="'#' + s"/></svg></div>
      </div>

      <aside class="right">
        <div class="right-head">
          <span class="placeholder">搜索模块</span>
          <svg class="search-btn"><use href="#i-search"/></svg>
        </div>
        <div class="mod-list">
          <div v-for="(m, i) in modules" :key="i" class="mod-row">
            <svg class="ic24" :class="m.color" viewBox="0 0 24 24">
              <use :href="'#' + m.icon" width="24" height="24"/>
              <text v-if="m.icon === 'i-findtext'" class="glyph-t" x="12" y="17.500" text-anchor="middle">A</text>
              <template v-if="m.icon === 'i-ocr'">
                <text class="glyph-o" x="7.800" y="16" text-anchor="middle" textLength="13.500" lengthAdjust="spacingAndGlyphs">OC</text>
                <text class="glyph-r" x="16" y="16.500" textLength="7.500" lengthAdjust="spacingAndGlyphs">R</text>
              </template>
            </svg>
            <span class="mod-text">{{ m.text }}</span>
          </div>
        </div>
      </aside>
    </main>

    <footer class="status">v5.0.0.3 64位</footer>
  </div>
</template>

<style>
html, body { margin: 0; background: #fff; }
</style>

<style scoped>
.defs { position: absolute; width: 0; height: 0; overflow: hidden; }
.app {
  box-sizing: border-box; width: 1621px; height: 1095px; margin-top: 2px;
  border: 2px solid #8a8a8a; display: flex; flex-direction: column; background: #fff; color: #000;
  font: 18px/24px "Noto Sans", "Noto Sans CJK SC", sans-serif; overflow: hidden;
}
svg { display: block; flex: none; color: #000; }
.spacer { flex: 1; }
.tool { display: inline-flex; align-items: center; gap: 3px; white-space: nowrap; flex: none; }
.ic { width: 24px; height: 24px; margin: -2px; }
.ic-w { width: 24px; height: 24px; }
.ic24 { width: 27px; height: 27px; margin: -1.500px; }
.plain24 { width: 24px; height: 24px; }

.glyph-a { font: 700 15px "Liberation Sans", sans-serif; fill: #000; }
.glyph-f { font: 700 12px "Liberation Sans", sans-serif; fill: #fff; }
.glyph-t { font: 700 16px "Liberation Sans", sans-serif; fill: currentColor; }
.glyph-o { font: 700 11.500px "Liberation Sans", sans-serif; fill: #fff; }
.glyph-r { font: 700 12px "Liberation Sans", sans-serif; fill: #000; }

svg.c-blue { color: #5aa9ff; }
svg.c-steel { color: #5b8db8; }
svg.c-teal { color: #27b3b8; }
svg.c-leaf { color: #2aa84a; }
.c-green { color: #008000; }

.titlebar {
  height: 43px; flex: none; display: flex; align-items: center; padding: 0 14px 0 12px;
  border-bottom: 2px solid #e0e0e0; box-sizing: content-box;
}
.logo { width: 22px; height: 22px; }
.brand { margin-left: 9px; font-size: 19px; font-weight: 500; }
.badge { margin-left: 7px; height: 29px; line-height: 28px; padding: 0 12px; border-radius: 10px; background: #b0e0e6; }
.titlebar .tool { margin-right: 15px; }
.deepseek { color: #4d6bfe; font-size: 18.500px; }
.winbtn { width: 24px; height: 24px; margin-left: 16px; }
.titlebar .tool + .winbtn { margin-left: 0; }

.menubar {
  height: 37px; flex: none; display: flex; align-items: center; gap: 17.500px; padding: 0 83px 0 18px;
  border-bottom: 2px solid #cfcfcf;
}

.main { flex: 1; min-height: 0; display: flex; }
.splitter { width: 8px; flex: none; box-sizing: border-box; background: #f7f7f7; border-left: 1.500px solid #c4c4c4; border-right: 1.500px solid #c4c4c4; }

.left { width: 380px; flex: none; display: flex; flex-direction: column; }
.left-head { flex: none; padding-top: 15px; border-bottom: 2px solid #b4b4b4; box-sizing: content-box; height: 76px; }
.search-box {
  display: flex; align-items: center; box-sizing: border-box; width: 349px; height: 36px; margin-left: 16px;
  border: 2px solid #b4b4b4; padding: 0 15px 0 10px;
}
.search-input { flex: 1; min-width: 0; border: 0; outline: 0; padding: 2px 0 0; font: inherit; background: transparent; }
.search-input::placeholder { color: #bbb; opacity: 1; }
.search-btn { width: 24px; height: 24px; }
.left-title { margin-top: 9px; text-align: center; line-height: 24px; }

.tree-wrap { flex: 1; min-height: 0; display: flex; }
.tree { width: 361px; flex: none; overflow: hidden; padding-top: 1px; }
.tree-row { height: 42px; display: flex; align-items: center; white-space: nowrap; }
.tree-text { padding-top: 2px; }
.tree-row.selected { background: #cce6ff; margin-left: 2px; }
.fold { width: 14px; flex: none; display: flex; align-items: center; }
.tri { width: 8px; height: 8px; }
.tri-c { width: 6px; height: 11px; }
.lv0 { padding-left: 17px; gap: 4px; }
.tree-row.lv0.selected { padding-left: 15px; }
.lv1 { padding-left: 41px; }
.lv1 .fold { width: 17px; }
.lv2 { padding-left: 75px; }
.lv2 .fold { width: 0; }
.t-folder { width: 24px; height: 21px; margin-right: 3px; }
.t-grid { width: 21px; height: 21px; margin-right: 7px; }
.t-play { width: 16px; height: 21px; margin-right: 12px; }

.scrollbar { width: 18px; flex: none; display: flex; flex-direction: column; background: #f8f8f8; font-size: 10px; line-height: 26px; text-align: center; }
.left-sb { padding-top: 1px; box-sizing: border-box; }
.sb-btn, .sb-end { flex: none; height: 26px; font-size: 10px; color: #c0c0c0; overflow: hidden; }
.sb-end { height: 20px; }
.sb-end.tall { height: 27px; }
.sb-btn.tall { height: 25px; }
.sb-thumb { flex: none; background: #e2e2e2; height: 275px; }
.center-sb .sb-thumb { height: 89px; }
.sb-rest { flex: 1; }

.config { flex: none; height: 418px; box-sizing: border-box; border-top: 2px solid #ebebeb; padding: 9px 15px 0 16px; display: flex; flex-direction: column; }
.config-head { display: flex; align-items: center; gap: 8px; height: 24px; }
.card {
  align-self: center; margin-top: 20px; width: 102px; height: 93px; box-sizing: border-box;
  border: 2px solid #808080; display: flex; flex-direction: column; align-items: center; padding-top: 8px;
}
.card-ic { width: 46px; height: 46px; }
.card span { margin-top: 4px; }
.card-actions { align-self: center; display: flex; gap: 15px; margin-top: 8px; }
.f-label { height: 24px; margin-top: 17px; display: block; }
.f-label.first { margin-top: 8px; }
.f-input {
  box-sizing: border-box; width: 349px; height: 45px; margin-top: 6px; border: 2px solid #b0b0b0; border-radius: 10px;
  padding: 0 17px; font: inherit; outline: 0; background: #fff; color: #000;
}
.f-btns { display: flex; justify-content: center; gap: 23px; margin-top: 15px; }
.f-btn {
  width: 78px; height: 33px; box-sizing: border-box; border: 2px solid #a0a0a0; border-radius: 5px; background: #fff;
  font: inherit; color: #000; padding: 0;
}

.center { width: 847px; flex: none; display: flex; flex-direction: column; position: relative; }
.run-bar { height: 43px; flex: none; display: flex; border-bottom: 2px solid #cfcfcf; }
.nav { width: 80px; flex: none; box-sizing: border-box; display: flex; align-items: center; gap: 12px; padding-left: 8px; border-right: 2px solid #cfcfcf; }
.nav-ic { width: 22px; height: 22px; }
.run-tools { flex: 1; display: flex; align-items: center; padding-left: 18px; }
.run-ic { width: 18px; height: 23px; }
.g1, .g2 { gap: 5px; }
.g2 { margin-left: 23px; }
.g3 { margin-left: 22px; }
.g4 { margin-left: 19px; }
.modes { display: flex; margin-left: 20px; background: #e0e0e0; font-size: 16.500px; line-height: 27px; }
.mode { width: 72px; text-align: center; white-space: nowrap; }
.mode.on { background: #ffa500; }
.g5 { margin-left: 20px; gap: 5px; }

.head-block { flex: none; height: 132px; box-sizing: content-box; border-bottom: 2px solid #b0b0b0; }
.title-row { height: 45px; display: flex; align-items: center; padding-left: 7px; }
.title { font-size: 22px; font-weight: 700; margin-right: 18px; }
.title-row .tool { margin-right: 14px; }
.module-rows { display: flex; flex-wrap: wrap; column-gap: 1.400px; padding-left: 7px; }
.mod { box-sizing: border-box; padding: 2px 8px 0; height: 24px; }
.mod.active { background: #c8e6f5; }
.edit-row { display: flex; gap: 17.600px; padding-left: 15px; margin-top: 8px; height: 24px; }

.steps-wrap { height: 513px; flex: none; display: flex; border-bottom: 2px solid #b4b4b4; box-sizing: content-box; }
.steps { flex: 1; min-width: 0; height: 482px; overflow: hidden; }
.steps-inner { margin-top: -2px; }
.step { height: 42px; display: flex; align-items: center; white-space: nowrap; }
.step-text { padding-top: 2px; }
.num { width: 44px; flex: none; display: flex; justify-content: center; color: #b4bccc; }
.num .tri { margin-left: 7px; }
.step-ic { width: 26px; height: 26px; margin-left: 14px; margin-right: 4px; }
.brace { width: 24px; margin-left: 15px; margin-right: 5px; text-align: center; font-weight: 700; font-size: 20px; white-space: pre; }
.hot { color: #e8602c; font-style: normal; }
.group { margin-left: 45px; border: 2px solid #808080; border-right: 0; box-sizing: border-box; }
.group-a { height: 210px; }
.group-b { height: 84px; }
.group .step:first-child { margin-top: -2px; }
.in-group .num { width: 40px; }
.in-group .step-ic { margin-left: 17px; margin-right: 3px; }

.log-bar { flex: none; height: 42px; display: flex; align-items: center; padding-left: 10px; border-bottom: 2px solid #b4b4b4; }
.chk { display: inline-flex; align-items: center; gap: 7px; margin-right: 10.200px; white-space: nowrap; }
.box { width: 20px; height: 20px; box-sizing: border-box; border: 2px solid #808080; display: block; background: #fff; }
.tick { width: 16px; height: 16px; }
.log-open { margin-left: 4px; }
.log-body { flex: 1; }

.key-menu {
  position: absolute; left: 120px; top: 114px; width: 256px; height: 303px; box-sizing: border-box; padding-top: 1px;
  background: #fff; border: 1px solid #bdbdbd; border-right: 2px solid #a8a8a8; border-bottom: 2px solid #a8a8a8; color: #333;
}
.km-item { height: 33px; line-height: 34px; padding-left: 53px; position: relative; }
.km-item.hover { background: #f0f0f0; }
.km-arrow { position: absolute; right: 10px; top: 12px; width: 0; height: 0; border-left: 5px solid #333; border-top: 5px solid transparent; border-bottom: 5px solid transparent; }
.sub-menu {
  position: absolute; left: 252px; top: 128px; width: 168px; height: 306px; box-sizing: border-box;
  background: #fff; border: 4px solid #f0f0f0; box-shadow: 0 0 0 1px #a8a8a8;
}
.sm-item { height: 33px; line-height: 35px; padding-left: 50px; }

.sidebar { width: 46px; flex: none; padding-top: 46px; box-sizing: border-box; }
.side-item { width: 42px; height: 42px; margin-left: 1px; display: flex; align-items: center; justify-content: center; }
.side-item.selected { background: #cce6ff; }

.right { flex: 1; min-width: 0; border-left: 1.500px solid #aaa; display: flex; flex-direction: column; }
.right-head { height: 44px; flex: none; box-sizing: border-box; display: flex; align-items: center; justify-content: space-between; padding: 0 15px 0 11px; border-bottom: 2px solid #aaa; }
.placeholder { color: #bbb; }
.mod-list { padding-top: 2px; }
.mod-row { height: 42px; display: flex; align-items: center; gap: 5px; padding-left: 15px; white-space: nowrap; }
.mod-text { padding-top: 2px; }

.status { flex: none; height: 36px; border-top: 2px solid #e8e8e8; display: flex; align-items: center; justify-content: flex-end; padding-right: 8px; }
</style>
